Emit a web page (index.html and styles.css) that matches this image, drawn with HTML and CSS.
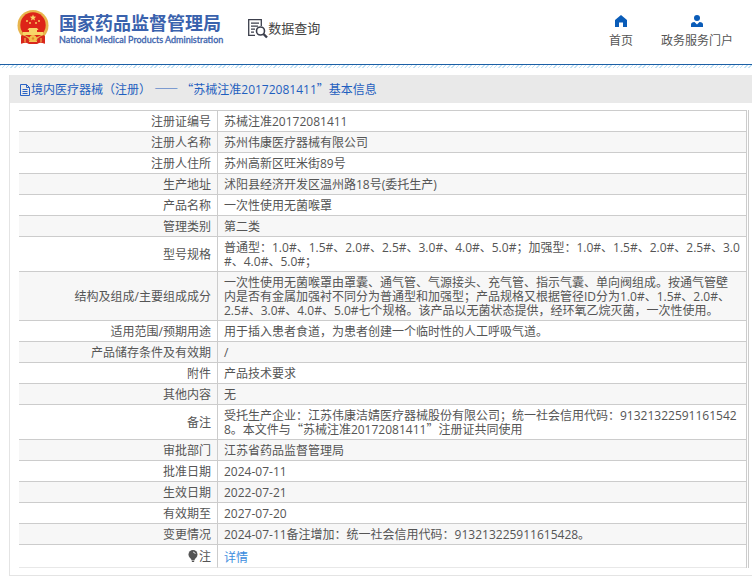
FILE: index.html
```html
<!DOCTYPE html>
<html lang="zh-CN">
<head>
<meta charset="utf-8">
<title>国家药品监督管理局 数据查询</title>
<meta name="viewport" content="width=device-width, initial-scale=1">
<link rel="stylesheet" href="styles.css">
</head>
<body>
<header class="site-header">
  <a class="brand" href="#">
    <svg class="emblem" viewBox="0 0 32 34" aria-hidden="true">
      <path fill="#d9271c" d="M4 24h24v9.500l-5-1-3 1.500h-8l-3-1.500-5 1z"/>
      <circle cx="16" cy="15.500" r="15.500" fill="#e8b54d"/>
      <circle cx="16" cy="15" r="12.700" fill="#dd2418"/>
      <path fill="#f8d568" d="M16 4.500l.9 2.100 2.300.1-1.800 1.500.6 2.300-2-1.300-2 1.300.6-2.300-1.800-1.500 2.300-.1z"/>
      <g fill="#f6cb5e"><circle cx="10" cy="11" r="1"/><circle cx="13" cy="13" r="1"/><circle cx="19" cy="13" r="1"/><circle cx="22" cy="11" r="1"/></g>
      <path fill="#f8d568" d="M12 18h8l1.500 2H20v2h6v3H6v-3h6v-2h-1.500z"/>
      <path fill="#d9271c" d="M5 25q4 1 7 4l-1 4-2-.5-5 1zM27 25q-4 1-7 4l1 4 2-.5 5 1z"/>
      <circle cx="16" cy="28.500" r="3.500" fill="#f3c14c"/>
      <circle cx="16" cy="28.500" r="1.200" fill="#e08a2c"/>
      <path stroke="#f3c65a" fill="none" d="M12 31.500h8M8 28v4.500M24 28v4.500"/>
    </svg>
    <span class="brand-text">
      <span class="brand-cn">国家药品监督管理局</span>
      <span class="brand-en">National Medical Products Administration</span>
    </span>
  </a>
  <a class="query" href="#">
    <svg class="query-icon" viewBox="0 0 20 20" fill="none" stroke="#3c3f4c" aria-hidden="true">
      <path stroke-width="1.300" d="M7 16.400H.7V.7h12.600V7"/>
      <path stroke-width="1.300" d="M3 4.200h8M3 7.200h7M3 10.200h4M3 13.200h3"/>
      <circle cx="12.500" cy="12" r="4" stroke-width="1.600"/>
      <path stroke-width="2.400" d="M15.500 15l3.500 3.500"/>
    </svg>
    <span>数据查询</span>
  </a>
  <nav class="main-nav">
    <a href="#">
      <svg viewBox="0 0 12 12" aria-hidden="true"><path fill="#0a5cb8" d="M6 0L0 5v7h4V7.500h4V12h4V5z"/></svg>
      <span>首页</span>
    </a>
    <a href="#">
      <svg viewBox="0 0 12 12" aria-hidden="true"><circle cx="6" cy="3" r="3" fill="#0a5cb8"/><path fill="#0a5cb8" d="M0 12V9.500Q0 7 3.500 7L6 9.500 8.500 7Q12 7 12 9.500V12z"/></svg>
      <span>政务服务门户</span>
    </a>
  </nav>
</header>
<main class="panel">
  <h1 class="panel-title">
    <svg class="doc-icon" viewBox="0 0 10 12" fill="none" stroke="#2a63c4" aria-hidden="true"><path d="M.5.5h6l3 3v8h-9zM6.500.5v3h3M2.500 5.500h5M2.500 7.500h5M2.500 9.500h5"/></svg>
    <span>境内医疗器械（注册） <span class="cjk">——</span> <span class="cjk">“</span>苏械注准20172081411<span class="cjk">”</span>基本信息</span>
  </h1>
  <div class="table-frame">
    <table class="info">
      <tbody>
        <tr><th scope="row">注册证编号</th><td>苏械注准20172081411</td></tr>
        <tr><th scope="row">注册人名称</th><td>苏州伟康医疗器械有限公司</td></tr>
        <tr><th scope="row">注册人住所</th><td>苏州高新区旺米街89号</td></tr>
        <tr><th scope="row">生产地址</th><td>沭阳县经济开发区温州路18号(委托生产)</td></tr>
        <tr><th scope="row">产品名称</th><td>一次性使用无菌喉罩</td></tr>
        <tr><th scope="row">管理类别</th><td>第二类</td></tr>
        <tr><th scope="row">型号规格</th><td>普通型：1.0#、1.5#、2.0#、2.5#、3.0#、4.0#、5.0#；加强型：1.0#、1.5#、2.0#、2.5#、3.0<wbr>#、4.0#、5.0#；</td></tr>
        <tr><th scope="row">结构及组成/主要组成成分</th><td>一次性使用无菌喉罩由罩囊、通气管、气源接头、充气管、指示气囊、单向阀组成。按通气管壁<br>内是否有金属加强衬不同分为普通型和加强型；产品规格又根据管径ID分为1.0#、1.5#、2.0#、<br>2.5#、3.0#、4.0#、5.0#七个规格。该产品以无菌状态提供，经环氧乙烷灭菌，一次性使用。</td></tr>
        <tr><th scope="row">适用范围/预期用途</th><td>用于插入患者食道，为患者创建一个临时性的人工呼吸气道。</td></tr>
        <tr><th scope="row">产品储存条件及有效期</th><td>/</td></tr>
        <tr><th scope="row">附件</th><td>产品技术要求</td></tr>
        <tr><th scope="row">其他内容</th><td>无</td></tr>
        <tr><th scope="row">备注</th><td>受托生产企业：江苏伟康洁婧医疗器械股份有限公司；统一社会信用代码：913213225911615428。本文件与<span class="cjk">“</span>苏械注准20172081411<span class="cjk">”</span>注册证共同使用</td></tr>
        <tr><th scope="row">审批部门</th><td>江苏省药品监督管理局</td></tr>
        <tr><th scope="row">批准日期</th><td>2024-07-11</td></tr>
        <tr><th scope="row">生效日期</th><td>2022-07-21</td></tr>
        <tr><th scope="row">有效期至</th><td>2027-07-20</td></tr>
        <tr><th scope="row">变更情况</th><td>2024-07-11备注增加：统一社会信用代码：913213225911615428。</td></tr>
        <tr class="note"><th scope="row"><svg class="bulb" viewBox="0 0 10 12" aria-hidden="true"><circle cx="5" cy="4.500" r="4.500" fill="#555"/><path fill="#555" d="M2.500 8h5L6.500 10h-3zM3.500 10.500h3L6 12H4z"/><path stroke="#ddd" fill="none" d="M5 2q2 .2 2.300 2"/></svg>注</th><td><a href="#">详情</a></td></tr>
      </tbody>
    </table>
  </div>
</main>
</body>
</html>
```

FILE: styles.css
```css
* {
  box-sizing: border-box;
}

body {
  margin: 0;
  background: #fff;
  color: #555;
  font-family: "Open Sans", "Noto Sans CJK SC", sans-serif;
  font-size: 12px;
  line-height: 14px;
  text-spacing-trim: space-all;
}

a {
  color: inherit;
  text-decoration: none;
}

/* Full-width quotes and dashes */
.cjk {
  font-family: "Noto Sans CJK SC", sans-serif;
  line-height: 12px;
}

.site-header {
  display: flex;
  align-items: flex-start;
  height: 70px;
  padding: 10px 19px 0 17px;
  background:
    linear-gradient(#1c5fa5, #1c5fa5) 0 64px / 100% 1px no-repeat,
    repeating-linear-gradient(135deg, #c3e2f5 0 1px, #fff 1px 3px) 0 65px / 100% 3px no-repeat;
}

.brand {
  display: flex;
  gap: 10px;
}

.emblem {
  width: 32px;
  height: 34px;
}

.brand-text {
  display: flex;
  flex-direction: column;
  padding-top: 2px;
  color: #3a62ad;
}

.brand-cn {
  font-size: 18px;
  font-weight: 700;
  line-height: 22px;
}

.brand-en {
  font-family: Lato, sans-serif;
  font-size: 9px;
  line-height: 12px;
  -webkit-text-stroke: 0.3px #3a62ad;
}

.query {
  display: flex;
  align-items: center;
  margin: 9px 0 0 25px;
  color: #444;
  font-size: 13px;
  line-height: 18px;
}

.query span {
  padding-bottom: 2px;
}

.query-icon {
  width: 20px;
  height: 20px;
}

.main-nav {
  display: flex;
  gap: 28px;
  margin-left: auto;
  padding-top: 5px;
}

.main-nav a {
  display: flex;
  flex-direction: column;
  align-items: center;
  gap: 7px;
}

.main-nav svg {
  width: 12px;
  height: 12px;
}

.panel {
  margin: 5px 0 0 9px;
  border-left: 1px solid #e4e4e4;
  border-bottom: 1px solid #e4e4e4;
}

.panel-title {
  display: flex;
  align-items: center;
  gap: 1px;
  height: 28px;
  margin: 0;
  padding: 2px 0 0 10px;
  background: #e9e9e9;
  color: #1f5fbf;
  font-size: 12px;
  font-weight: 400;
}

.doc-icon {
  width: 10px;
  height: 12px;
}

.table-frame {
  margin: 7px 3px 7px 9px;
  padding-right: 1px;
  border-right: 1px solid #ccc;
}

.info {
  width: 100%;
  border-collapse: separate;
  border-spacing: 0;
  border-top: 1px solid #ccc;
  border-right: 1px solid #ccc;
}

.info th,
.info td {
  padding: 4px 6px 2px;
  border-bottom: 1px solid #ccc;
  font-weight: 400;
}

.info th {
  width: 199px;
  border-right: 1px solid #ccc;
  text-align: right;
}

.info td {
  padding-right: 4px;
  word-break: break-all;
}

.info tr:nth-child(even) {
  background: #f7f7f7;
}

.info .note th,
.info .note td {
  padding-top: 5px;
  padding-bottom: 3px;
  border-bottom-color: #e8e8e8;
}

.info .note td {
  padding-top: 6px;
  padding-bottom: 2px;
}

.note a {
  color: #3c8dde;
}

.bulb {
  width: 10px;
  height: 12px;
  margin-right: 1px;
  vertical-align: -1px;
}
```
